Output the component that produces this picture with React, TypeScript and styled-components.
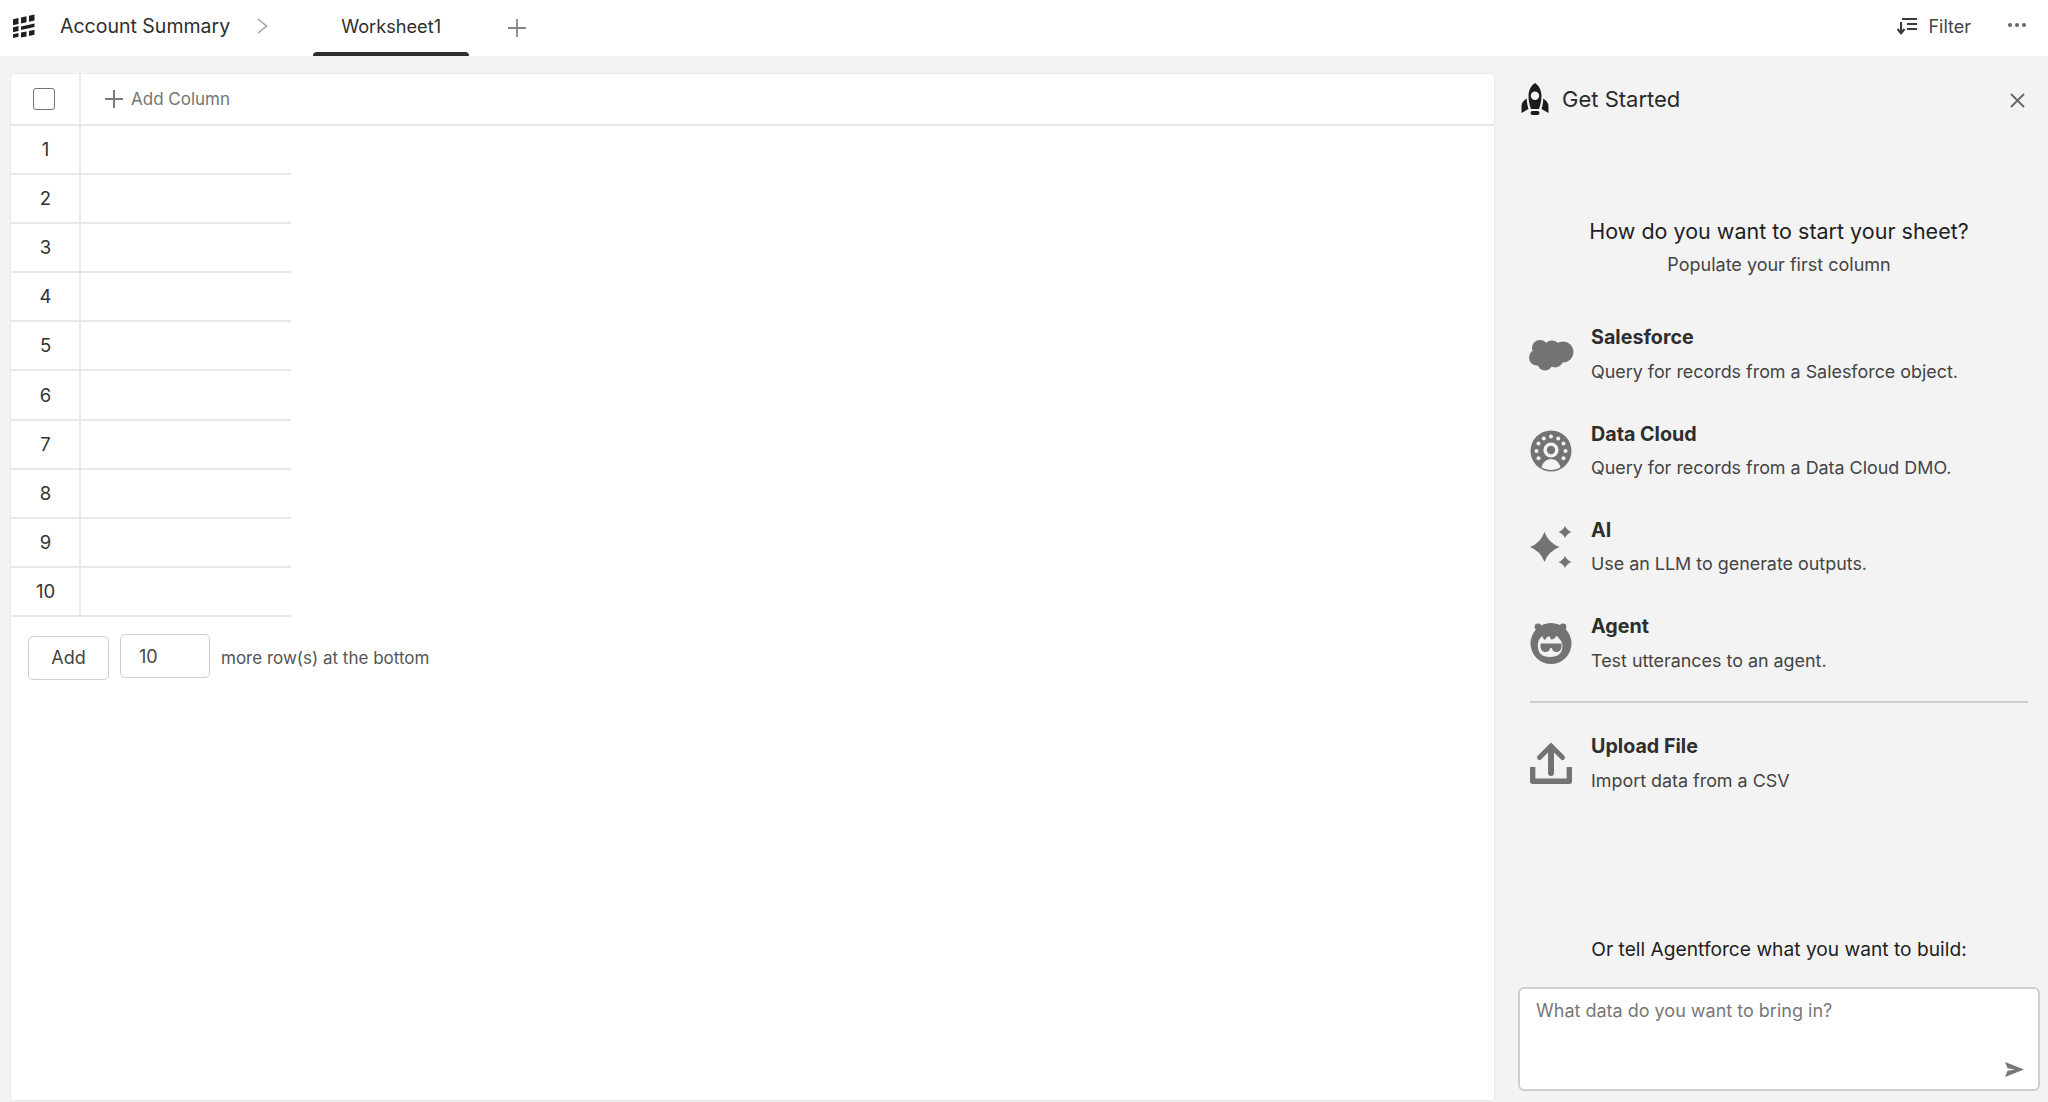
import React from "react";
import styled, { createGlobalStyle } from "styled-components";

const GlobalStyle = createGlobalStyle`
  html, body {
    margin: 0;
    padding: 0;
    background: #f3f3f3;
    font-family: Inter, "Noto Sans", "Liberation Sans", sans-serif;
    color: #2e2e2e;
  }
  * { box-sizing: border-box; }
`;

const ROWS = [1, 2, 3, 4, 5, 6, 7, 8, 9, 10];

const SalesforceIcon = () => (
  <svg width="45" height="32" viewBox="0 0 45 32" fill="#737373">
    <circle cx="11" cy="9" r="8" />
    <circle cx="23" cy="9.5" r="8" />
    <circle cx="34" cy="13" r="10.5" />
    <circle cx="8" cy="18.5" r="8" />
    <circle cx="16" cy="24" r="7.5" />
    <circle cx="26" cy="20" r="8.5" />
    <circle cx="20" cy="16" r="10" />
  </svg>
);

const DataCloudIcon = () => (
  <svg width="42" height="42" viewBox="0 0 42 42">
    <circle cx="21" cy="21" r="20.5" fill="#737373" />
    <g fill="#f3f3f3">
      <circle cx="21" cy="6.5" r="2" />
      <circle cx="13.8" cy="8.4" r="2" />
      <circle cx="28.2" cy="8.4" r="2" />
      <circle cx="8.5" cy="13.6" r="2" />
      <circle cx="33.5" cy="13.6" r="2" />
      <circle cx="6.5" cy="21" r="2" />
      <circle cx="35.5" cy="21" r="2" />
      <circle cx="8.5" cy="28.2" r="2" />
      <circle cx="33.5" cy="28.2" r="2" />
      <circle cx="21" cy="20" r="7.6" />
      <path d="M11.500 37.500c1-5 5-8.500 9.500-8.500s8.500 3.500 9.500 8.500c-3 1.500-6 2.500-9.500 2.500s-6.500-1-9.500-2.500z" />
    </g>
    <circle cx="21" cy="20" r="4.2" fill="#737373" />
  </svg>
);

const SparklesIcon = () => (
  <svg width="42" height="42" viewBox="0 0 42 42" fill="#737373">
    <path d="M14.500 6Q18.500 17 29.500 21 18.500 25 14.500 36 10.500 25 0 21 10.500 17 14.500 6z" />
    <path d="M35 0Q36.800 4.200 41.500 6 36.800 7.800 35 12 33.200 7.800 28.500 6 33.200 4.200 35 0z" />
    <path d="M35 30Q36.800 34.200 41.500 36 36.800 37.800 35 42 33.200 37.800 28.500 36 33.200 34.200 35 30z" />
  </svg>
);

const AgentIcon = () => (
  <svg width="42" height="41" viewBox="0 0 42 41" fill="#737373">
    <circle cx="8" cy="3.800" r="3.400" />
    <circle cx="33" cy="3.800" r="3.400" />
    <circle cx="21" cy="20.500" r="20.500" />
    <path
      fill="#f3f3f3"
      d="M8 20c.5-3 2.200-5.500 4.500-7 .2 2 1 3.200 2.500 4 1-2.200 2.800-3.600 5-4-.3 1.500 0 2.800 1.500 3.500 2.500-.5 4-1.800 4.800-3.800 1.700 1.500 4.700 4 5.700 7.300 1 3.200.5 7.500-2 10.500-2.500 2.600-6.500 3.500-10 3.500s-7.500-.9-10-3.500C8 27.500 7.500 23.500 8 20z"
    />
    <path d="M10.500 20.500h21v3c0 3-2 5.500-5 5.500-2.800 0-4.300-2-4.800-4h-1.400c-.5 2-2 4-4.800 4-3 0-5-2.500-5-5.500z" />
  </svg>
);

const UploadIcon = () => (
  <svg width="42" height="42" viewBox="0 0 42 42" fill="none" stroke="#737373">
    <path d="M21 31V5" strokeWidth="6" strokeLinecap="round" />
    <path d="M9.500 15.500 21 4l11.500 11.500" strokeWidth="5" strokeLinecap="round" />
    <path d="M2.700 25v14.300h36.600V25" strokeWidth="5.400" strokeLinejoin="round" />
  </svg>
);

const OPTIONS = [
  { title: "Salesforce", desc: "Query for records from a Salesforce object.", icon: <SalesforceIcon /> },
  { title: "Data Cloud", desc: "Query for records from a Data Cloud DMO.", icon: <DataCloudIcon /> },
  { title: "AI", desc: "Use an LLM to generate outputs.", icon: <SparklesIcon /> },
  { title: "Agent", desc: "Test utterances to an agent.", icon: <AgentIcon /> },
];

export default function App() {
  return (
    <Page>
      <GlobalStyle />
      <TopBar>
        <AppLogo viewBox="0 0 23 24" fill="#1f1f1f">
          <path d="M1 5.200 6.500 4v6L1 11.200zM9 3.500 14.500 2.300v6L9 9.500zM17 1.700 22.500.5v6L17 7.700z" />
          <path d="M1 13.300 6.500 12.100v5L1 18.300zM9 12.600 22.500 9.600v3.500L9 16.100z" />
          <path d="M1 20.300 6.500 19.100v3.700L1 24zM9 18.600 14.500 17.400v5L9 23.600zM17 16.900 22.500 15.700v5L17 21.900z" />
        </AppLogo>
        <SheetName>Account Summary</SheetName>
        <Chevron viewBox="0 0 11 16" fill="none" stroke="#a3a3a3" strokeWidth="1.600">
          <path d="M1 1l8.500 7L1 15" />
        </Chevron>
        <Tab>Worksheet1</Tab>
        <AddTab viewBox="0 0 18 18" stroke="#858585" strokeWidth="1.800">
          <path d="M9 0v18M0 9h18" />
        </AddTab>
        <BarActions>
          <FilterButton>
            <svg width="20" height="17" viewBox="0 0 20 17" fill="none" stroke="#3a3a3a" strokeWidth="2">
              <path d="M5 1h15M10 6h10M10 11h10M4 4v11" />
              <path d="M.5 11 4 15.200 7.500 11" strokeWidth="2.200" />
            </svg>
            Filter
          </FilterButton>
          <MoreDots>
            <Dot />
            <Dot />
            <Dot />
          </MoreDots>
        </BarActions>
      </TopBar>

      <Main>
        <SheetCard>
          <HeaderRow>
            <CheckCell>
              <Checkbox type="checkbox" />
            </CheckCell>
            <AddColumn>
              <svg width="20" height="20" viewBox="0 0 20 20" stroke="#7a7a7a" strokeWidth="2">
                <path d="M10 1v18M1 10h18" />
              </svg>
              Add Column
            </AddColumn>
          </HeaderRow>
          {ROWS.map((n) => (
            <Row key={n}>
              <RowNumber>{n}</RowNumber>
            </Row>
          ))}
          <AddRows>
            <AddButton>Add</AddButton>
            <CountInput defaultValue="10" />
            <AddHint>more row(s) at the bottom</AddHint>
          </AddRows>
        </SheetCard>

        <SidePanel>
          <PanelHeader>
            <svg width="28" height="32" viewBox="0 0 28 32" fill="#1c1c1c">
              <path
                fillRule="evenodd"
                d="M14 0c4.500 3 6.500 8 6.500 13 0 5-1.200 9.500-2.500 13h-8C8.700 22.500 7.500 18 7.500 13 7.500 8 9.500 3 14 0zm0 8.500a4.200 4.200 0 1 0 0 8.400 4.200 4.200 0 0 0 0-8.400z"
              />
              <path d="M5.800 15.500C5.700 19 6.500 23 7.500 26L.5 30v-7c0-2.700 2-5.500 5.300-7.500zM22.200 15.500c3.300 2 5.300 4.800 5.300 7.500v7l-7-4c1-3 1.800-7 1.700-10.500z" />
              <rect x="9.500" y="28" width="9" height="4" rx="2" />
            </svg>
            <PanelTitle>Get Started</PanelTitle>
            <CloseButton viewBox="0 0 15 15" stroke="#666" strokeWidth="1.800">
              <path d="M1 1l13 13M14 1 1 14" />
            </CloseButton>
          </PanelHeader>

          <Intro>
            <IntroTitle>How do you want to start your sheet?</IntroTitle>
            <IntroSub>Populate your first column</IntroSub>
          </Intro>

          <OptionList>
            {OPTIONS.map((o) => (
              <Option key={o.title}>
                <OptionIcon>{o.icon}</OptionIcon>
                <div>
                  <OptionTitle>{o.title}</OptionTitle>
                  <OptionDesc>{o.desc}</OptionDesc>
                </div>
              </Option>
            ))}
          </OptionList>
          <Divider />
          <Option>
            <OptionIcon>
              <UploadIcon />
            </OptionIcon>
            <div>
              <OptionTitle>Upload File</OptionTitle>
              <OptionDesc>Import data from a CSV</OptionDesc>
            </div>
          </Option>

          <PromptArea>
            <PromptLabel>Or tell Agentforce what you want to build:</PromptLabel>
            <PromptBox>
              <PromptInput placeholder="What data do you want to bring in?" />
              <SendIcon viewBox="0 0 19 15" fill="#777">
                <path d="M0 0l19 7.500L0 15l2.500-6.200L10 7.500 2.500 6.200z" />
              </SendIcon>
            </PromptBox>
          </PromptArea>
        </SidePanel>
      </Main>
    </Page>
  );
}

const Page = styled.div`
  width: 2048px;
  height: 1102px;
  display: flex;
  flex-direction: column;
  overflow: hidden;
  background: #f3f3f3;
`;

const TopBar = styled.header`
  height: 56px;
  flex: none;
  display: flex;
  align-items: center;
  background: #fff;
  padding: 0 0 4px 12px;
`;

const AppLogo = styled.svg`
  width: 23px;
  height: 24px;
  flex: none;
`;

const SheetName = styled.div`
  margin-left: 25px;
  font-size: 19.5px;
  color: #2e2e2e;
`;

const Chevron = styled.svg`
  width: 11px;
  height: 16px;
  margin-left: 27px;
`;

const Tab = styled.div`
  position: relative;
  margin-left: 45px;
  width: 156px;
  height: 52px;
  display: flex;
  align-items: center;
  justify-content: center;
  font-size: 18.2px;
  color: #2e2e2e;
  &::after {
    content: "";
    position: absolute;
    left: 0;
    right: 0;
    bottom: -4px;
    height: 4px;
    background: #2e2e2e;
    border-radius: 4px 4px 0 0;
  }
`;

const AddTab = styled.svg`
  width: 18px;
  height: 18px;
  margin-left: 39px;
  margin-top: 3px;
`;

const BarActions = styled.div`
  margin-left: auto;
  display: flex;
  align-items: center;
  padding-right: 22px;
`;

const FilterButton = styled.div`
  display: flex;
  align-items: center;
  gap: 11px;
  font-size: 18px;
  color: #444;
`;

const MoreDots = styled.div`
  display: flex;
  gap: 3px;
  margin-left: 37px;
  margin-top: -2px;
`;

const Dot = styled.span`
  width: 4px;
  height: 4px;
  border-radius: 50%;
  background: #666;
`;

const Main = styled.main`
  flex: 1;
  display: flex;
  padding: 17px 0 1px 10px;
  min-height: 0;
`;

const SheetCard = styled.section`
  width: 1485px;
  flex: none;
  background: #fff;
  border: 1px solid #e9e9e9;
  border-radius: 4px;
`;

const HeaderRow = styled.div`
  height: 52px;
  display: flex;
  border-bottom: 2px solid #e6e6e6;
`;

const CheckCell = styled.div`
  width: 70px;
  flex: none;
  display: flex;
  align-items: center;
  justify-content: center;
  padding-right: 2px;
  border-right: 2px solid #ececec;
`;

const Checkbox = styled.input`
  appearance: none;
  width: 22px;
  height: 22px;
  margin: 0;
  background: #fff;
  border: 1.5px solid #747474;
  border-radius: 3px;
`;

const AddColumn = styled.div`
  display: flex;
  align-items: center;
  gap: 7px;
  padding-left: 23px;
  font-size: 17px;
  color: #757575;
`;

const Row = styled.div`
  width: 280px;
  height: 49.1px;
  border-bottom: 2px solid #e8e8e8;
`;

const RowNumber = styled.div`
  width: 70px;
  height: 100%;
  display: flex;
  align-items: center;
  justify-content: center;
  padding: 0 0 1px 1px;
  font-size: 18.5px;
  color: #333;
  border-right: 2px solid #ececec;
`;

const AddRows = styled.div`
  display: flex;
  align-items: center;
  padding: 19px 0 0 17px;
`;

const AddButton = styled.button`
  width: 81px;
  height: 44px;
  background: #fff;
  border: 1.5px solid #cfcfcf;
  border-radius: 5px;
  font: inherit;
  font-size: 18px;
  color: #444;
  padding: 0;
`;

const CountInput = styled.input`
  width: 90px;
  height: 44px;
  margin: -3px 0 0 11px;
  padding: 0 0 0 18px;
  background: #fff;
  border: 1.5px solid #cfcfcf;
  border-radius: 5px;
  font: inherit;
  font-size: 18px;
  color: #444;
  outline: none;
`;

const AddHint = styled.span`
  margin-left: 11px;
  font-size: 17px;
  color: #555;
`;

const SidePanel = styled.aside`
  flex: 1;
  min-width: 0;
  display: flex;
  flex-direction: column;
  padding: 0 8px 10px 23px;
`;

const PanelHeader = styled.div`
  display: flex;
  align-items: center;
  height: 52px;
  margin-left: 3px;
  padding-right: 15px;
`;

const PanelTitle = styled.div`
  margin-left: 13px;
  font-size: 22px;
  color: #2a2a2a;
`;

const CloseButton = styled.svg`
  width: 15px;
  height: 15px;
  margin-left: auto;
  margin-top: 2px;
`;

const Intro = styled.div`
  margin-top: 91px;
  text-align: center;
`;

const IntroTitle = styled.div`
  font-size: 21.5px;
  line-height: 30px;
  color: #1f1f1f;
`;

const IntroSub = styled.div`
  margin-top: 3.5px;
  font-size: 18px;
  line-height: 30px;
  color: #444;
`;

const OptionList = styled.div`
  margin-top: 44px;
  display: flex;
  flex-direction: column;
  gap: 34.3px;
`;

const Option = styled.div`
  display: flex;
  align-items: center;
  height: 62px;
  padding-left: 9px;
`;

const OptionIcon = styled.div`
  width: 48px;
  flex: none;
  display: flex;
  justify-content: center;
  margin-right: 16px;
`;

const OptionTitle = styled.div`
  font-size: 19.7px;
  font-weight: 700;
  line-height: 28px;
  color: #2e2e2e;
`;

const OptionDesc = styled.div`
  margin-top: 6.5px;
  font-size: 17.9px;
  line-height: 28px;
  color: #444;
`;

const Divider = styled.div`
  height: 2px;
  background: #cfcfcf;
  margin: 27px 12px 29px 12px;
`;

const PromptArea = styled.div`
  margin-top: auto;
`;

const PromptLabel = styled.div`
  text-align: center;
  font-size: 19.2px;
  line-height: 28px;
  color: #1f1f1f;
  margin-bottom: 24px;
`;

const PromptBox = styled.div`
  position: relative;
  height: 104px;
  background: #fff;
  border: 2px solid #cfcfcf;
  border-radius: 6px;
`;

const PromptInput = styled.textarea`
  display: block;
  width: 100%;
  height: 100%;
  border: 0;
  outline: none;
  resize: none;
  background: transparent;
  padding: 9px 40px 0 16px;
  font: inherit;
  font-size: 18px;
  line-height: 26px;
  color: #333;
  &::placeholder {
    color: #777;
    opacity: 1;
  }
`;

const SendIcon = styled.svg`
  position: absolute;
  right: 14px;
  bottom: 12px;
  width: 19px;
  height: 15px;
`;
